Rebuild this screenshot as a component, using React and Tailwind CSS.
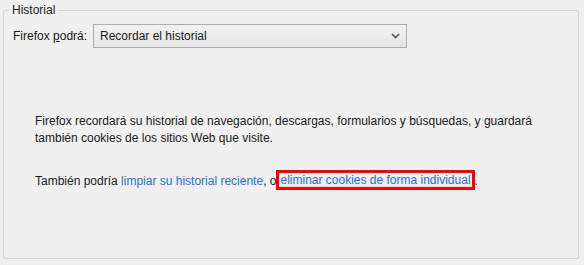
export default function App() {
  return (
    <div
      className="w-[584px] h-[265px] bg-[#f0f0f0] pt-[3px] pl-[3px] text-[12px] text-[#1a1a1a]"
      style={{ fontFamily: '"Liberation Sans", Arial, sans-serif' }}
    >
      <fieldset className="w-[576px] h-[256px] border border-[#d5d5d5] rounded-[2px] pl-[8px] pr-[8px] m-0">
        <legend className="px-[2px] ml-[-2px] leading-[14px]">Historial</legend>
        <div className="grid grid-cols-[80px_314px] items-center mt-[7px] pl-[1px]">
          <span>
            Firefox <span className="underline">p</span>odrá:
          </span>
          <div className="flex items-center justify-between h-[24px] border border-[#adadad] bg-gradient-to-b from-[#f2f2f2] to-[#e5e5e5] pl-[6px] pr-[6px]">
            <span>Recordar el historial</span>
            <svg width="9" height="6" viewBox="0 0 9 6">
              <path d="M1 1 L4.5 4.5 L8 1" fill="none" stroke="#555" strokeWidth="1.6" />
            </svg>
          </div>
        </div>
        <div className="pl-[23px] pr-[20px] mt-[65px] leading-[17px]">
          <p>
            Firefox recordará su historial de navegación, descargas, formularios y búsquedas, y guardará
            también cookies de los sitios Web que visite.
          </p>
          <p className="mt-[24px]">
            También podría <span className="text-[#2a6fd6]">limpiar su historial reciente</span>, o
            <span className="inline-block relative -top-[1px] border-[3px] border-[#ff0000] px-[1px] leading-[14px] text-[#2a6fd6]">
              eliminar cookies de forma individual
            </span>
            .
          </p>
        </div>
      </fieldset>
    </div>
  );
}
